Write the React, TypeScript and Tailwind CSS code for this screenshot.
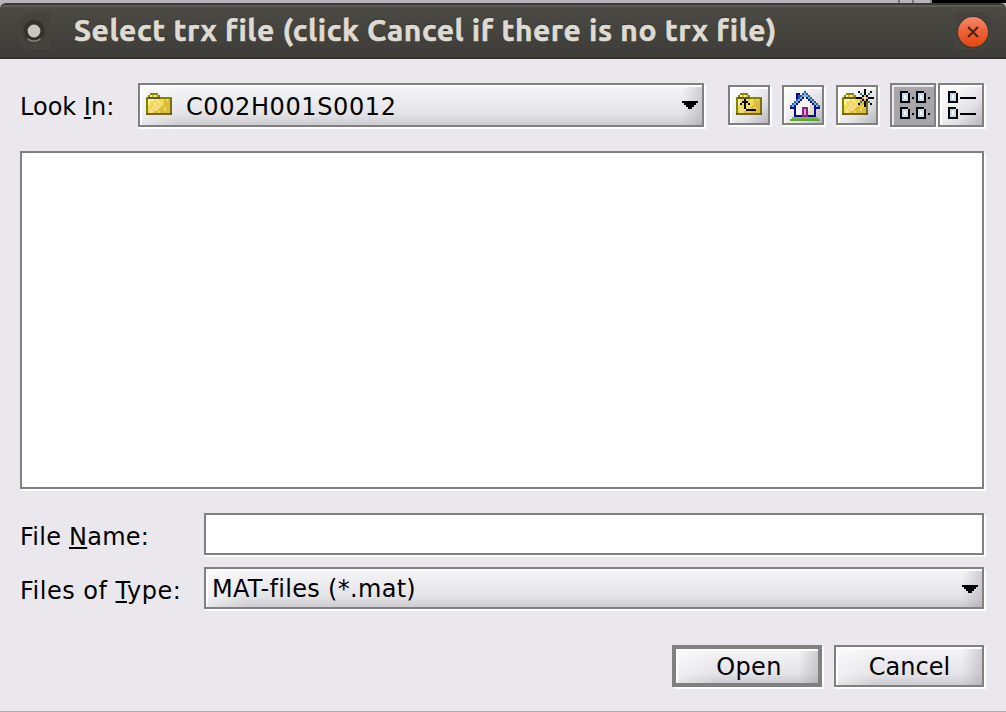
import React from "react";

const palette: Record<string, string> = {
  o: "#848400",
  b: "#5c5a28",
  d: "#7a6a1c",
  y: "#f0dc54",
  Y: "#fdf4a0",
  g: "#dcbc3c",
  p: "#fcd8a8",
  k: "#000000",
  n: "#0a0a96",
  l: "#78b4dc",
  s: "#2c5c9c",
  W: "#f8f6ee",
  e: "#e0dcc4",
  m: "#8c1c8c",
  q: "#e0a0d8",
  G: "#5ca834",
  H: "#78bc44",
  c: "#c4d8f0",
  w: "#ffffff",
  t: "#1c8088",
  r: "#f4a860",
};

const folder = [
  "..oooo.......",
  ".oYgYgo......",
  "obbbbbboooooo",
  "oYYYyYyyygygd",
  "oYyyyypyygggd",
  "oYyypyypygggd",
  "oyyypypyggggd",
  "oyypypyggyggd",
  "oypypygggyggd",
  "oypyggygggggd",
  "bdddddddddddb",
];

const upFolder = [
  "..oooo.......",
  ".oYgYgo......",
  "obbbbbboooooo",
  "oYyykyyyygygd",
  "oYykkkyyygggd",
  "oYkykykyygggd",
  "oyyykypyggggd",
  "oyyykyyggyggd",
  "oypypkkkkkggd",
  "oypyggygggggd",
  "bdddddddddddb",
];

const home = [
  ".......s.......",
  "...nn.sls......",
  "...nssllls.....",
  "...nslnWnls....",
  "...slnWWWnls...",
  "..slnWWWWWnls..",
  ".slnWWWWWWWnls.",
  "slnWWWWWWWeenls",
  "nnnWWWmmmWeennn",
  "..nWWWmqmWeen..",
  "..nWWWmqmeeen..",
  "..nWWWmqmeeen..",
  "..nnnnmmmnnnn..",
  ".HHHHHHHHHHHHH.",
  "GGGGGGGGGGGGGGG",
];

const newFolder = [
  "...........k....",
  "........k..k..k.",
  "..oooo...t.k.t..",
  ".oYgYgo...krk...",
  "obbbbbbkkkrwrkkk",
  "oYYYyYyyygkrk...",
  "oYyyyypyytgkdt..",
  "oYyypyypkggkd.k.",
  "oyyypypyggykd...",
  "oyypypyggyggd...",
  "oypypygggyggd...",
  "oypyggygggggd...",
  "bdddddddddddb...",
];

const gridView = [
  "kkkk....kkkk....",
  "kccck...kccck...",
  "kcwck...kcwck...",
  "kcwck.k.kcwck.k.",
  "kccck...kccck...",
  "kkkkk...kkkkk...",
  "................",
  "................",
  "kkkk....kkkk....",
  "kccck...kccck...",
  "kcwck...kcwck...",
  "kcwck.k.kcwck.k.",
  "kccck...kccck...",
  "kkkkk...kkkkk...",
];

const listView = [
  "kkkk..........",
  "kccck.........",
  "kcwck.........",
  "kcwck.kkkkkkkk",
  "kccck.........",
  "kkkkk.........",
  "..............",
  "..............",
  "kkkk..........",
  "kccck.........",
  "kcwck.........",
  "kcwck.kkkkkkkk",
  "kccck.........",
  "kkkkk.........",
];

const arrow = ["kkkkkkkk", ".kkkkkk.", "..kkkk..", "...kk..."];

function PixelIcon({ rows, className = "" }: { rows: string[]; className?: string }) {
  const w = rows[0].length;
  const h = rows.length;
  return (
    <svg
      width={w * 2}
      height={h * 2}
      viewBox={`0 0 ${w} ${h}`}
      shapeRendering="crispEdges"
      className={`block shrink-0 ${className}`}
    >
      {rows.flatMap((row, y) =>
        [...row].map((ch, x) =>
          ch === "." ? null : (
            <rect key={`${x}-${y}`} x={x} y={y} width={1} height={1} fill={palette[ch]} />
          ),
        ),
      )}
    </svg>
  );
}

const face =
  "border-2 border-[#808080] shadow-[2px_2px_0_#fff,0_2px_0_#fff,inset_2px_2px_0_#fff]";
const wide =
  "bg-[linear-gradient(90deg,rgba(255,255,255,0.5)_0,rgba(255,255,255,0)_40px,rgba(160,160,165,0)_calc(100%-20px),rgba(150,150,155,0.4)_100%),linear-gradient(180deg,#f6f6f8_0%,#e9e8ec_50%,#e4e3e7_72%,#cccbcf_100%)]";
const square = "bg-[linear-gradient(135deg,#ffffff_0%,#f0f0f2_40%,#e2e1e5_65%,#b8b8bc_100%)]";

function Mnemonic({ children }: { children: React.ReactNode }) {
  return (
    <span className="underline decoration-2 underline-offset-2 [text-decoration-skip-ink:none]">
      {children}
    </span>
  );
}

function TitleBar() {
  return (
    <div className="flex h-[59px] shrink-0 flex-col bg-[#b6b4bb]">
      <div className="flex h-[3px] justify-end">
        <div className="w-[16px] border-x-2 border-[#77757c]" />
        <div className="w-[18px] border-r-2 border-[#8a888e]" />
        <div className="w-[74px] bg-black" />
      </div>
      <div className="flex h-[56px] items-center rounded-t-[6px] border-y-2 border-t-[#3a3935] border-b-[#33322e] bg-[linear-gradient(180deg,#5d5b53_0,#5d5b53_2px,#4b4a44_2px,#3d3c38_100%)] pl-[16px] pr-[10px]">
        <div className="flex h-[38px] w-[34px] shrink-0 items-center justify-center rounded-l-full bg-[#44433e]">
          <svg width="34" height="38" viewBox="0 0 34 38" className="block">
            <circle cx="18" cy="19.5" r="11.5" fill="#3b3a36" />
            <path d="M11.5 27 A11.5 11.5 0 0 0 24.500 27" fill="none" stroke="#85837c" strokeWidth="1.6" />
            <circle cx="18" cy="18" r="10" fill="#32312d" />
            <circle cx="18" cy="19" r="6.4" fill="#cbc6c0" />
          </svg>
        </div>
        <h1 className="-mt-[3px] ml-[24px] flex-1 whitespace-nowrap font-['Ubuntu','Noto_Sans',sans-serif] text-[30px] font-bold leading-[38px] tracking-[0.57px] text-[#dfdbd2] [-webkit-text-stroke:0.6px_#dfdbd2] [text-shadow:0_-1px_1px_#2b2a27]">
          Select trx file (click Cancel if there is no trx file)
        </h1>
        <button className="flex h-[38px] w-[42px] shrink-0 items-center rounded-r-full bg-[#44433e]">
          <svg width="38" height="38" viewBox="0 0 38 38" className="block">
            <defs>
              <linearGradient id="close" x1="0" y1="0" x2="0" y2="1">
                <stop offset="0" stopColor="#f58a68" />
                <stop offset="0.5" stopColor="#ec6038" />
                <stop offset="1" stopColor="#e3480f" />
              </linearGradient>
            </defs>
            <circle cx="19" cy="20" r="16" fill="#393834" />
            <circle cx="19" cy="20" r="15" fill="url(#close)" />
            <path d="M14 15 L24 25 M24 15 L14 25" stroke="#4a2416" strokeWidth="2" />
          </svg>
        </button>
      </div>
    </div>
  );
}

export default function App() {
  return (
    <div className="flex h-[712px] w-[1006px] flex-col overflow-hidden border-b border-[#aeada9] bg-[#eae8ed] font-['DejaVu_Sans',sans-serif] text-[24px] leading-[28px] text-black">
      <TitleBar />
      <main className="flex flex-1 flex-col pl-[20px] pr-[22px] pt-[24px]">
        <div className="flex h-[44px] items-center">
          <label className="w-[118px] whitespace-nowrap pt-[3px]">
            Look <Mnemonic>I</Mnemonic>n:
          </label>
          <div className={`flex h-[44px] w-[566px] items-center pl-[6px] pr-[4px] ${face} ${wide}`}>
            <PixelIcon rows={folder} className="-mt-[2px]" />
            <span className="ml-[14px] flex-1 pt-[3px] tracking-[0.6px]">C002H001S0012</span>
            <PixelIcon rows={arrow} />
          </div>
          <div className="ml-[24px] flex items-center gap-[12px]">
            <button className={`flex h-[40px] w-[42px] items-start pl-[6px] pt-[6px] ${face} ${square}`}>
              <PixelIcon rows={upFolder} />
            </button>
            <button className={`flex h-[40px] w-[42px] items-start pl-[6px] pt-[4px] ${face} ${square}`}>
              <PixelIcon rows={home} />
            </button>
            <button className={`flex h-[40px] w-[42px] items-start pl-[4px] pt-[2px] ${face} ${square}`}>
              <PixelIcon rows={newFolder} />
            </button>
          </div>
          <div className="ml-[12px] flex gap-[2px]">
            <button className="flex h-[44px] w-[46px] items-start border-2 border-[#808080] bg-[#a6a5aa] pl-[8px] pt-[6px] shadow-[0_2px_0_#fff,2px_2px_0_#fff,inset_2px_2px_0_#eae8ed]">
              <PixelIcon rows={gridView} />
            </button>
            <button className={`flex h-[44px] w-[46px] items-start pl-[8px] pt-[6px] ${face} ${square}`}>
              <PixelIcon rows={listView} />
            </button>
          </div>
        </div>
        <div className="mt-[24px] h-[338px] border-2 border-[#808080] bg-white shadow-[0_2px_0_#fff,2px_2px_0_#fff]" />
        <div className="mt-[24px] flex h-[42px] items-center">
          <label className="w-[184px] whitespace-nowrap pt-[6px] tracking-[0.25px]">
            File <Mnemonic>N</Mnemonic>ame:
          </label>
          <input className="h-[42px] flex-1 border-2 border-[#808080] bg-white shadow-[0_2px_0_#fff,2px_2px_0_#fff] outline-none" />
        </div>
        <div className="mt-[12px] flex h-[42px] items-center">
          <label className="w-[184px] whitespace-nowrap pt-[6px] tracking-[0.5px]">
            Files of <Mnemonic>T</Mnemonic>ype:
          </label>
          <div className={`flex h-[42px] flex-1 items-center pl-[6px] pr-[4px] ${face} ${wide}`}>
            <span className="flex-1 pt-[2px] tracking-[0.3px]">MAT-files (*.mat)</span>
            <PixelIcon rows={arrow} className="mt-[2px]" />
          </div>
        </div>
        <div className="mt-[36px] flex justify-end gap-[12px]">
          <button
            className={`h-[42px] w-[150px] border-4 border-[#808080] shadow-[2px_2px_0_#fff,inset_2px_2px_0_#fff] ${wide}`}
          >
            <span className="block pl-[4px] pt-px leading-[34px] tracking-[0.3px]">Open</span>
          </button>
          <button className={`h-[42px] w-[150px] ${face} ${wide}`}>
            <span className="block pl-px pt-px leading-[38px]">Cancel</span>
          </button>
        </div>
      </main>
    </div>
  );
}
